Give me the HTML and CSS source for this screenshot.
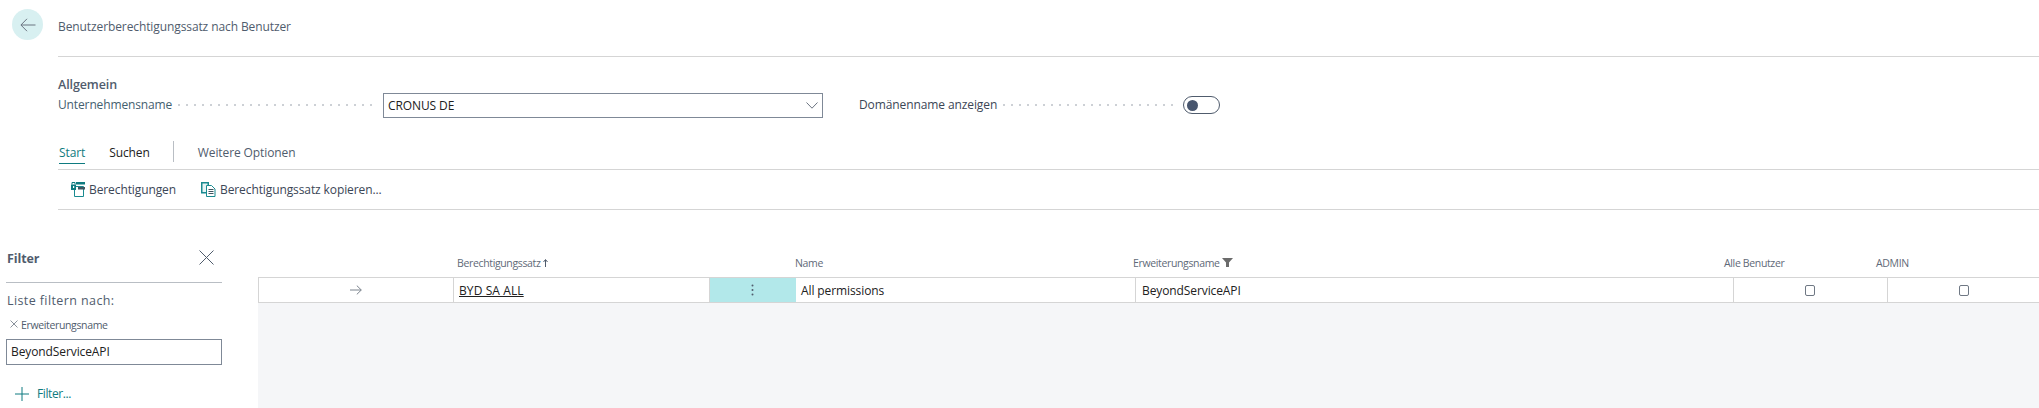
FILE: index.html
```html
<!DOCTYPE html>
<html lang="de">
<head>
<meta charset="utf-8">
<title>Benutzerberechtigungssatz nach Benutzer</title>
<link rel="stylesheet" href="styles.css">
</head>
<body>
<div class="page">
  <header class="top">
    <button class="back" aria-label="Zurück">
      <svg width="16" height="14" viewBox="0 0 16 14"><path d="M15.5 7H1M7 .8 .9 7 7 13.2" fill="none" stroke="#6b7480" stroke-width="1"/></svg>
    </button>
    <div class="title">Benutzerberechtigungssatz nach Benutzer</div>
  </header>
  <section class="general">
    <h2 class="group">Allgemein</h2>
    <div class="fields">
      <div class="field field-company">
        <label class="label label-teal">Unternehmensname</label>
        <span class="dots"></span>
        <div class="select">
          <span class="select-value">CRONUS DE</span>
          <svg class="chevron" width="12" height="7" viewBox="0 0 12 7"><path d="M.5.5 6 6.2 11.5.5" fill="none" stroke="#6b7480"/></svg>
        </div>
      </div>
      <div class="field field-domain">
        <label class="label">Domänenname anzeigen</label>
        <span class="dots"></span>
        <span class="toggle"><span class="knob"></span></span>
      </div>
    </div>
  </section>
  <nav class="tabs">
    <span class="tab tab-active">Start</span>
    <span class="tab tab-dark">Suchen</span>
    <span class="tab-sep"></span>
    <span class="tab">Weitere Optionen</span>
  </nav>
  <div class="actions">
    <span class="action">
      <svg width="14" height="15" viewBox="0 0 14 15"><path d="M3.5 4.5h9v10h-9z" fill="#fff" stroke="#1a8a90"/><path d="M5 0h9v2.5H5z" fill="#0f7b80"/><rect x="7" y="5" width="7" height="2.5" fill="#3f5560"/><path d="M0 2.5h5V8H0z" fill="#0f7b80"/><path d="M1 2.5V.5h3v2" fill="none" stroke="#0f7b80"/><rect x="2" y="4" width="1.2" height="2" fill="#fff"/></svg>
      Berechtigungen
    </span>
    <span class="action action-copy">
      <svg width="15" height="15" viewBox="0 0 15 15"><path d="M.75.75h6.5v10H.75z" fill="#e6f4f5" stroke="#1a8a90" stroke-width="1.5"/><path d="M5.5 3.5h5l3.5 3.5v7.5H5.5z" fill="#fff" stroke="#1a8a90"/><path d="M7.5 7.5h5M7.5 9.5h5M7.5 11.5h5" stroke="#3f5560"/></svg>
      Berechtigungssatz kopieren...
    </span>
  </div>
  <main class="content">
    <aside class="filter">
      <div class="filter-head">
        <strong class="filter-title">Filter</strong>
        <svg width="15" height="15" viewBox="0 0 15 15"><path d="M.5.5l14 14M14.5.5l-14 14" stroke="#505c6d" fill="none"/></svg>
      </div>
      <div class="filter-by">Liste filtern nach:</div>
      <div class="filter-name">
        <svg width="8" height="8" viewBox="0 0 8 8"><path d="M.5.5l7 7M7.5.5l-7 7" stroke="#8a929c" fill="none"/></svg>
        <span>Erweiterungsname</span>
      </div>
      <div class="filter-input">BeyondServiceAPI</div>
      <div class="filter-add">
        <svg width="14" height="14" viewBox="0 0 14 14"><path d="M7 0v14M0 7h14" stroke="#0f7b80" fill="none"/></svg>
        <span>Filter...</span>
      </div>
    </aside>
    <section class="list">
      <div class="row head">
        <div class="hc"></div>
        <div class="hc">Berechtigungssatz <svg width="5" height="8" viewBox="0 0 5 8"><path d="M2.5 8V1M.5 3 2.5.5l2 2.5" stroke="#505c6d" fill="none"/></svg></div>
        <div class="hc"></div>
        <div class="hc hc-name">Name</div>
        <div class="hc hc-ext">Erweiterungsname <svg width="11" height="9" viewBox="0 0 11 9"><path d="M0 0h11L7 4.5V9H4V4.5z" fill="#6b6b6b"/></svg></div>
        <div class="hc hc-all">Alle Benutzer</div>
        <div class="hc hc-admin">ADMIN</div>
      </div>
      <div class="row body">
        <div class="c c-arrow"><svg width="12" height="10" viewBox="0 0 12 10"><path d="M0 5h11.2M6.8.6 11.3 5 6.8 9.4" stroke="#7b838d" fill="none"/></svg></div>
        <div class="c c-link"><a class="link">BYD SA ALL</a></div>
        <div class="c c-menu"><svg width="3" height="12" viewBox="0 0 3 12"><circle cx="1.5" cy="1.5" r="1" fill="#505c6d"/><circle cx="1.5" cy="6" r="1" fill="#505c6d"/><circle cx="1.5" cy="10.5" r="1" fill="#505c6d"/></svg></div>
        <div class="c c-name">All permissions</div>
        <div class="c c-ext">BeyondServiceAPI</div>
        <div class="c c-check"><span class="box"></span></div>
        <div class="c c-check"><span class="box"></span></div>
      </div>
    </section>
  </main>
</div>
</body>
</html>
```
FILE: styles.css
```css
* { box-sizing: border-box; }
html, body { margin: 0; height: 100%; background: #fff; }
body { font-family: "Open Sans", "Noto Sans", sans-serif; font-size: 12px; color: #505c6d; overflow: hidden; letter-spacing: -0.1px; }
.page { display: flex; flex-direction: column; height: 408px; width: 2039px; }

.top { display: flex; height: 57px; padding: 9px 0 0 12px; }
.back { width: 31px; height: 31px; border-radius: 50%; border: 0; padding: 0; background: #d8f0f1; display: flex; align-items: center; justify-content: center; }
.title { flex: 1; margin-left: 15px; height: 48px; padding-top: 9px; border-bottom: 1px solid #d5d5d5; line-height: 18px; }

.general { padding: 19px 0 0 58px; height: 76px; }
.group { margin: 0; font-size: 12.5px; line-height: 18px; font-weight: 600; color: #505c6d; letter-spacing: -0.1px; }
.fields { display: flex; }
.field { display: flex; align-items: center; }
.field-company { width: 765px; margin-top: -2px; height: 26px; }
.field-domain { width: 361px; margin-top: -2px; height: 26px; margin-left: 36px; }
.label { white-space: nowrap; color: #3b4656; line-height: 18px; }
.label-teal { color: #44606f; letter-spacing: -0.13px; }
.dots { flex: 1; height: 2px; margin: 0 5px 0 3px; background-image: radial-gradient(circle, #c9cdd2 0.7px, transparent 0.8px); background-size: 8px 2px; background-position: 0 center; }
.select { width: 440px; height: 25px; border: 1px solid #7f8997; display: flex; align-items: center; justify-content: space-between; padding: 0 4px; color: #212121; }
.toggle { width: 37px; height: 18px; border: 1px solid #505c6d; border-radius: 9px; display: flex; align-items: center; padding-left: 3px; }
.knob { width: 11px; height: 11px; border-radius: 50%; background: #48566e; }

.tabs { display: flex; align-items: flex-start; margin-left: 58px; height: 37px; border-bottom: 1px solid #d5d5d5; }
.tab { margin-top: 11px; line-height: 18px; height: 19px; }
.tabs .tab:first-child { margin-left: 1px; }
.tab-active { color: #0f7b80; border-bottom: 1px solid #0f7b80; height: 20px; }
.tab-dark { color: #212121; margin-left: 24px; }
.tab-sep { width: 1px; height: 21px; margin: 8px 24px 0 23px; background: #b9bec4; }

.actions { display: flex; align-items: center; margin-left: 58px; height: 40px; border-bottom: 1px solid #d5d5d5; padding-left: 13px; }
.action { display: flex; align-items: center; gap: 4px; color: #3b4656; }
.action-copy { margin-left: 25px; }

.content { flex: 1; display: flex; padding-top: 40px; }
.filter { width: 258px; padding: 0 36px 0 6px; flex: none; }
.filter-head { display: flex; justify-content: space-between; align-items: flex-start; height: 33px; padding: 0 8px 0 1px; border-bottom: 1px solid #b9bec4; }
.filter-title { font-size: 12.5px; font-weight: 700; color: #505c6d; line-height: 18px; }
.filter-by { margin: 9px 0 0 1px; line-height: 18px; font-size: 12.5px; letter-spacing: 0.4px; color: #505c6d; }
.filter-name { display: flex; align-items: center; gap: 3px; margin: 7px 0 0 4px; line-height: 16px; font-size: 10.5px; letter-spacing: -0.35px; }
.filter-name svg { margin-top: -3px; }
.filter-input { height: 26px; border: 1px solid #7f8997; margin-top: 6px; padding-left: 4px; line-height: 24px; color: #212121; }
.filter-add { display: flex; align-items: center; gap: 8px; margin: 20px 0 0 9px; color: #0f7b80; letter-spacing: -0.4px; }

.list { flex: 1; background: #f5f6f8; height: 100%; display: flex; flex-direction: column; }
.row { display: grid; grid-template-columns: 195px 256px 86px 340px 598px 154px 152px; }
.head { background: #fff; height: 27px; align-items: center; font-size: 10.5px; letter-spacing: -0.35px; color: #5f6a78; }
.hc { white-space: nowrap; padding-left: 4px; padding-bottom: 2px; }
.hc-name { padding-left: 0; }
.hc-ext { padding-left: 0; margin-left: -2px; }
.hc-all { padding-left: 0; margin-left: -9px; }
.hc-admin { padding-left: 0; margin-left: -11px; }
.body { background: #fff; height: 26px; border: 1px solid #d5d5d5; border-width: 1px 0 1px 1px; }
.c { display: flex; align-items: center; padding-left: 4px; color: #212121; border-right: 1px solid #d5d5d5; white-space: nowrap; min-width: 0; }
.c:last-child { border-right: 0; }
.c-arrow, .c-check, .c-menu { justify-content: center; padding: 0; }
.c-check { padding-right: 2px; }
.c-check:last-child { padding-right: 0; }
.c-menu { padding-right: 2px; }
.c-link { padding-left: 5px; letter-spacing: 0.1px; }
.c-name { padding-left: 5px; }
.c-ext { padding-left: 6px; }
.c-menu { background: #b2e8ea; border-right: 0; }
.link { color: #212121; text-decoration: underline; }
.box { width: 10px; height: 11px; border: 1px solid #6f7884; border-radius: 2px; background: #fff; }
```
